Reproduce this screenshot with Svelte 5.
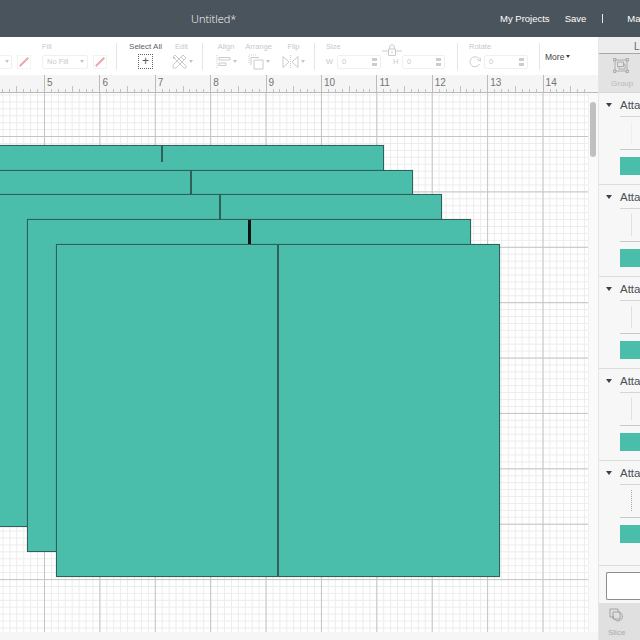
<script>
  const rulerNums = [5, 6, 7, 8, 9, 10, 11, 12, 13, 14];
  const inch = 55.4;
  const rulerStart = 44;

  const shapes = [
    { left: -60, top: 145, cut: 16 },
    { left: -31, top: 170, cut: 25 },
    { left: -2, top: 194, cut: 25 },
    { left: 27, top: 219, cut: 25, heavy: true },
    { left: 56, top: 244 },
  ];

  const layers = [
    { h: 92, ghost: "none" },
    { h: 92, ghost: "solid" },
    { h: 92, ghost: "solid" },
    { h: 92, ghost: "solid" },
    { h: 105, ghost: "dotted" },
  ];

  const ticks = [];
  for (let i = 0; i < 8 * 11; i++) {
    const x = rulerStart - inch + (i * inch) / 8;
    if (x < 588 && i % 8 !== 0) ticks.push({ x, tall: i % 4 === 0 });
  }
</script>

<div class="app">
  <header class="topbar">
    <div class="title">Untitled*</div>
    <nav class="topnav">
      <span>My Projects</span>
      <span>Save</span>
      <i class="sep"></i>
      <span>Ma</span>
    </nav>
  </header>

  <div class="body">
    <div class="left">
      <div class="toolbar">
        <div class="seg seg-a">
          <div class="ctl stub">
            <div class="lbl"></div>
            <div class="row"><div class="select"><span class="caret"></span></div></div>
          </div>
          <div class="ctl">
            <div class="lbl"></div>
            <div class="row"><div class="swatch"><svg viewBox="0 0 14 14"><path d="M2 12 12 2" /></svg></div></div>
          </div>
          <div class="ctl fill">
            <div class="lbl">Fill</div>
            <div class="row">
              <div class="select wide">No Fill<span class="caret"></span></div>
              <div class="swatch"><svg viewBox="0 0 14 14"><path d="M2 12 12 2" /></svg></div>
            </div>
          </div>
        </div>

        <div class="seg seg-b">
          <div class="ctl sel">
            <div class="lbl dark">Select All</div>
            <div class="row center"><div class="dashed">+</div></div>
          </div>
          <div class="ctl edit">
            <div class="lbl">Edit</div>
            <div class="row">
              <svg width="15" height="15" viewBox="0 0 15 15" class="ico">
                <path d="M1 3 3 1 14 12 14 14 12 14ZM11 1 14 4 4 14 1 14 1 11ZM3 3 1 5M9 3 12 6" />
              </svg>
              <span class="caret"></span>
            </div>
          </div>
        </div>

        <div class="seg seg-c">
          <div class="ctl align">
            <div class="lbl">Align</div>
            <div class="row center">
              <svg width="15" height="15" viewBox="0 0 15 15" class="ico">
                <path d="M1 1V14" stroke-dasharray="1 1" />
                <path d="M3 3.5H14V6H3ZM3 9H10V11.5H3Z" />
              </svg>
              <span class="caret"></span>
            </div>
          </div>
          <div class="ctl arrange">
            <div class="lbl">Arrange</div>
            <div class="row center">
              <svg width="16" height="16" viewBox="0 0 16 16" class="ico">
                <path d="M1 9V1H9" stroke-dasharray="1 1" />
                <path d="M3 11V3.5H11" />
                <path d="M6 6H15V15H6Z" />
              </svg>
              <span class="caret"></span>
            </div>
          </div>
          <div class="ctl flip">
            <div class="lbl">Flip</div>
            <div class="row center">
              <svg width="17" height="14" viewBox="0 0 17 14" class="ico">
                <path d="M1 1.5 7 7 1 12.5ZM16 1.5 10 7 16 12.5Z" />
                <path d="M8.5 0V14" stroke-dasharray="1 1" />
              </svg>
              <span class="caret"></span>
            </div>
          </div>
        </div>

        <div class="seg seg-d">
          <div class="ctl">
            <div class="lbl">Size</div>
            <div class="row">
              <span class="axis">W</span>
              <div class="spin">0<span class="arrows"></span></div>
              <div class="link">
                <svg width="22" height="12" viewBox="0 0 22 12" class="ico lock">
                  <path d="M1 7H7M15 7H21M7.5 5H14.5V11.5H7.5ZM8.5 5V3.2a2.5 2.5 0 0 1 5 0V5M11 7.5V9.5" />
                </svg>
                <span class="axis">H</span>
              </div>
              <div class="spin short">0<span class="arrows"></span></div>
            </div>
          </div>
        </div>

        <div class="seg seg-e">
          <div class="ctl">
            <div class="lbl">Rotate</div>
            <div class="row">
              <svg width="12" height="12" viewBox="0 0 12 12" class="ico rot">
                <path d="M10.5 8A5 5 0 1 1 9.5 2.2M8 3.5 11.5 5 11 1.5" />
              </svg>
              <div class="spin">0<span class="arrows"></span></div>
            </div>
          </div>
        </div>

        <div class="more">More<span class="caret dark"></span></div>
      </div>

      <div class="ruler">
        {#each rulerNums as n, i}
          <div class="rmark" style="left: {rulerStart + i * inch}px">{n}</div>
        {/each}
        {#each ticks as t}
          <i class="tick" class:tall={t.tall} style="left: {t.x}px"></i>
        {/each}
      </div>

      <div class="workspace">
        <div class="canvas">
          {#each shapes as s}
            <div class="shape" style="left: {s.left}px; top: {s.top - 93}px">
              <i class="fold" class:heavy={s.heavy} style={s.cut ? `height: ${s.cut}px` : ""}></i>
            </div>
          {/each}
        </div>
        <div class="scrolltrack"><div class="thumb"></div></div>
      </div>
      <div class="strip"></div>
    </div>

    <aside class="right">
      <div class="tab-head"><span>L</span></div>
      <div class="tab-body">
        <svg width="16" height="15" viewBox="0 0 16 15" class="ico">
          <path d="M2 2H14V13H2ZM0.5 0.5H3V3H0.5ZM13 0.5H15.5V3H13ZM0.5 12H3V14.5H0.5ZM13 12H15.5V14.5H13ZM4.5 4H10.5V8.5H4.5ZM6 8.5V11H12V6H10.5" />
        </svg>
        <span>Group</span>
      </div>
      {#each layers as l}
        <section class="layer" style="height: {l.h}px">
          <div class="layer-head"><span class="caret dark"></span>Atta</div>
          <div class="layer-mid"><i class="ghost {l.ghost}"></i></div>
          <div class="layer-color"></div>
        </section>
      {/each}
      <div class="blank-wrap"><div class="blank"></div></div>
      <div class="slice">
        <svg width="15" height="15" viewBox="0 0 15 15" class="ico">
          <path d="M1 1H9V4M1 1V9H4M4 4H11V11H4ZM4.5 7.5a4.5 4.5 0 1 0 5-3.5" />
        </svg>
        <span>Slice</span>
      </div>
    </aside>
  </div>
</div>

<style>
  :global(body) {
    margin: 0;
    background: #fff;
    font-family: "Liberation Sans", Arial, sans-serif;
  }
  .app {
    width: 640px;
    height: 640px;
    overflow: hidden;
    display: flex;
    flex-direction: column;
  }

  .topbar {
    height: 37px;
    flex: none;
    background: #4a545c;
    color: #fff;
    display: flex;
    align-items: center;
    padding-left: 191px;
    box-sizing: border-box;
  }
  .title {
    width: 309px;
    flex: none;
    font-family: "Open Sans", sans-serif;
    font-weight: 300;
    font-size: 11px;
    color: #fff;
  }
  .topnav {
    display: flex;
    align-items: center;
    font-size: 9.5px;
    white-space: nowrap;
  }
  .topnav span:first-child {
    margin-right: 15px;
  }
  .sep {
    width: 1px;
    height: 9px;
    background: #e8eaeb;
    margin: 0 24px 0 16px;
  }

  .body {
    flex: 1;
    display: flex;
    min-height: 0;
  }
  .left {
    width: 598px;
    flex: none;
    display: flex;
    flex-direction: column;
  }

  .toolbar {
    height: 38px;
    flex: none;
    display: flex;
    background: #fff;
    font-size: 7.5px;
    color: #c6c9cb;
    white-space: nowrap;
  }
  .seg {
    height: 27px;
    margin-top: 6px;
    display: flex;
    flex: none;
    border-right: 1px solid #e4e5e6;
    box-sizing: border-box;
  }
  .seg-a { width: 117px; }
  .seg-b { width: 86px; }
  .seg-c { width: 112px; }
  .seg-d { width: 143px; padding-left: 11px; }
  .seg-e { width: 82px; padding-left: 11px; }
  .ctl {
    display: flex;
    flex-direction: column;
  }
  .lbl {
    height: 11px;
    line-height: 8px;
  }
  .lbl.dark {
    color: #5c6165;
    font-size: 8px;
  }
  .row {
    height: 15px;
    display: flex;
    align-items: center;
  }
  .row.center {
    justify-content: center;
  }
  .caret {
    display: inline-block;
    border: 2.5px solid transparent;
    border-top: 3.5px solid #c3c6c8;
    border-bottom: 0;
    margin-left: 2px;
    flex: none;
  }
  .caret.dark {
    border-top-color: #3c4146;
  }
  .select {
    height: 14px;
    width: 12px;
    border: 1px solid #f0f0f0;
    border-left: 0;
    border-radius: 2px;
    display: flex;
    align-items: center;
    justify-content: flex-end;
    padding-right: 2px;
    box-sizing: border-box;
  }
  .select.wide {
    width: 46px;
    border-left: 1px solid #f0f0f0;
    justify-content: space-between;
    padding: 0 3px 0 4px;
  }
  .swatch {
    width: 14px;
    height: 14px;
    margin-left: 5px;
    border: 1px solid #f3f3f3;
    box-sizing: border-box;
  }
  .swatch svg {
    display: block;
    width: 100%;
    height: 100%;
    fill: none;
    stroke: #eca4ac;
    stroke-width: 2.2;
  }
  .ico {
    fill: none;
    stroke: #c9cbcd;
    stroke-width: 1;
    display: block;
    flex: none;
  }
  .stub { width: 12px; }
  .fill { margin-left: 11px; }
  .sel {
    margin-left: 12px;
    width: 33px;
    align-items: center;
  }
  .dashed {
    width: 15px;
    height: 15px;
    border: 1px dotted #5d6266;
    font-size: 12px;
    line-height: 13px;
    text-align: center;
    color: #55595c;
    box-sizing: border-box;
  }
  .edit { margin-left: 10px; }
  .edit .lbl { padding-left: 3px; }
  .align { margin-left: 13px; width: 20px; align-items: center; }
  .arrange { margin-left: 9px; width: 27px; align-items: center; }
  .flip { margin-left: 11px; width: 21px; align-items: center; }
  .axis {
    width: 11px;
    flex: none;
  }
  .spin {
    width: 44px;
    height: 14px;
    border: 1px solid #f0f0f0;
    border-radius: 2px;
    line-height: 12px;
    padding-left: 4px;
    box-sizing: border-box;
    position: relative;
    flex: none;
  }
  .spin.short {
    width: 43px;
  }
  .arrows {
    position: absolute;
    right: 3px;
    top: 2px;
    width: 5px;
    height: 8px;
    background: linear-gradient(#ccc 0 3px, transparent 3px 5px, #ccc 5px);
  }
  .link {
    width: 21px;
    padding-left: 12px;
    box-sizing: border-box;
    position: relative;
    flex: none;
  }
  .lock {
    position: absolute;
    left: 0;
    top: -13px;
  }
  .rot {
    margin-right: 3px;
  }
  .more {
    height: 27px;
    margin-top: 6px;
    padding-left: 5px;
    display: flex;
    align-items: center;
    color: #3f4448;
    font-size: 8.5px;
  }

  .ruler {
    height: 18px;
    flex: none;
    background: #f5f5f5;
    border-bottom: 1px solid #b9b9b9;
    box-sizing: border-box;
    position: relative;
    overflow: hidden;
  }
  .rmark {
    position: absolute;
    top: 0;
    height: 18px;
    border-left: 1px solid #bcbcbc;
    padding: 3px 0 0 2px;
    font-size: 10px;
    line-height: 10px;
    color: #747474;
    box-sizing: border-box;
  }
  .tick {
    position: absolute;
    bottom: 0;
    width: 1px;
    height: 3px;
    background: #c2c2c2;
  }
  .tick.tall {
    height: 6px;
  }

  .workspace {
    height: 539px;
    flex: none;
    display: flex;
  }
  .canvas {
    position: relative;
    width: 588px;
    flex: none;
    overflow: hidden;
    background-color: #fff;
    background-image:
      linear-gradient(to right, #c4c4c4 1px, transparent 1px),
      linear-gradient(to bottom, #c4c4c4 1px, transparent 1px),
      linear-gradient(to right, #ececec 1px, transparent 1px),
      linear-gradient(to bottom, #ececec 1px, transparent 1px);
    background-size:
      55.4px 55.4px,
      55.4px 55.4px,
      6.925px 6.925px,
      6.925px 6.925px;
    background-position:
      44px 43px,
      44px 43px,
      2.5px 1.5px,
      2.5px 1.5px;
  }
  .shape {
    position: absolute;
    width: 444px;
    height: 333px;
    box-sizing: border-box;
    background: #4bbdab;
    border: 1px solid #2e6159;
    box-shadow: 0 0 1px rgba(0, 0, 0, 0.3);
  }
  .fold {
    position: absolute;
    left: 220px;
    top: 0;
    bottom: 0;
    width: 1.5px;
    background: #2e6159;
  }
  .fold.heavy {
    width: 2.5px;
    background: #0c1413;
  }
  .scrolltrack {
    width: 10px;
    flex: none;
    background: #fafafa;
    border-left: 1px solid #f0f0f0;
    box-sizing: border-box;
  }
  .thumb {
    margin: 9px 0 0 1px;
    width: 6px;
    height: 55px;
    border-radius: 3px;
    background: #c0c0c0;
  }
  .strip {
    flex: 1;
    background: #f6f6f6;
  }

  .right {
    flex: 1;
    min-width: 0;
    display: flex;
    flex-direction: column;
    overflow: hidden;
    background: #f7f7f7;
    border-left: 1px solid #e6e6e6;
    box-sizing: border-box;
  }
  .tab-head {
    height: 17px;
    flex: none;
    border-bottom: 1px solid #a5a8aa;
    background: #ededed;
    font-size: 10px;
    line-height: 12px;
    color: #60666a;
    padding: 4px 0 0 35px;
    box-sizing: border-box;
  }
  .tab-body {
    height: 39px;
    flex: none;
    background: #e3e3e3;
    border-bottom: 1px solid #d8d8d8;
    box-sizing: border-box;
    padding: 4px 0 0 12px;
    color: #b7b9bb;
    font-size: 8px;
    display: flex;
    flex-direction: column;
    align-items: flex-start;
    gap: 6px;
  }
  .tab-body .ico {
    stroke: #a9acae;
    margin-left: 2px;
  }
  .layer {
    flex: none;
    padding-left: 21px;
    box-sizing: border-box;
    border-bottom: 1px solid #dcdcdc;
  }
  .layer-head {
    height: 24px;
    font-size: 11.5px;
    line-height: 24px;
    color: #4a4f53;
    border-bottom: 1px solid #d5d5d5;
    position: relative;
    white-space: nowrap;
    box-sizing: border-box;
  }
  .layer-head .caret {
    position: absolute;
    left: -14px;
    top: 10px;
    margin: 0;
    border-width: 3px;
    border-top-width: 4px;
    border-bottom-width: 0;
  }
  .layer-mid {
    height: 33px;
    border-bottom: 1px solid #c9c9c9;
    padding: 5px 0 0 11px;
    box-sizing: border-box;
  }
  .ghost {
    display: block;
    width: 1px;
    height: 22px;
  }
  .ghost.solid {
    background: #e0e0e0;
  }
  .ghost.none {
    background: #eeeeee;
  }
  .ghost.dotted {
    background: repeating-linear-gradient(#a8a8a8 0 1px, transparent 1px 2px);
  }
  .layer-color {
    margin-top: 7px;
    height: 18px;
    background: #4bbdab;
  }
  .blank-wrap {
    flex: none;
    height: 37px;
    padding: 6px 0 0 7px;
    box-sizing: border-box;
  }
  .blank {
    height: 26px;
    background: #fff;
    border: 1px solid #8c8c8c;
    border-right: 0;
    border-radius: 2px 0 0 2px;
  }
  .slice {
    flex: 1;
    background: #e0e0e0;
    color: #a9abad;
    font-size: 8px;
    padding: 5px 0 0 9px;
    display: flex;
    flex-direction: column;
    gap: 5px;
  }
  .slice .ico {
    stroke: #a0a3a5;
    margin-left: 1px;
  }
</style>
